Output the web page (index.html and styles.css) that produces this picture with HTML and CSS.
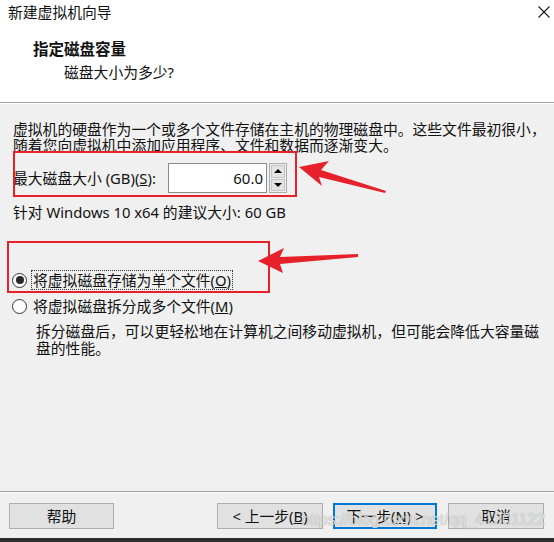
FILE: index.html
```html
<!DOCTYPE html>
<html lang="zh-CN">
<head>
  <meta charset="UTF-8">
  <meta name="viewport" content="width=device-width, initial-scale=1.0">
  <title>新建虚拟机向导</title>
  <link rel="stylesheet" href="styles.css">
</head>
<body>
  <div class="wizard">
    <div class="titlebar">
      <span class="titlebar-text">新建虚拟机向导</span>
      <svg class="close" viewBox="0 0 12 12" width="12" height="12">
        <path d="M0.5 0.5 L11.5 11.5 M11.5 0.5 L0.5 11.5" stroke="#1a1a1a" stroke-width="1.1" fill="none"/>
      </svg>
    </div>

    <div class="header">
      <div class="header-title">指定磁盘容量</div>
      <div class="header-sub">磁盘大小为多少?</div>
    </div>

    <div class="content">
      <p class="intro">虚拟机的硬盘作为一个或多个文件存储在主机的物理磁盘中。这些文件最初很小，<br>随着您向虚拟机中添加应用程序、文件和数据而逐渐变大。</p>

      <div class="size-row">
        <label class="size-label">最大磁盘大小 (GB)(<u>S</u>):</label>
        <div class="spin">
          <div class="spin-input">60.0</div>
          <div class="spin-buttons">
            <span class="spin-btn"><i class="tri-up"></i></span>
            <span class="spin-btn"><i class="tri-down"></i></span>
          </div>
        </div>
      </div>

      <p class="hint">针对 Windows 10 x64 的建议大小: 60 GB</p>

      <div class="options">
        <div class="option">
          <span class="radio checked"></span>
          <span class="option-text focused">将虚拟磁盘存储为单个文件(<u>O</u>)</span>
        </div>
        <div class="option">
          <span class="radio"></span>
          <span class="option-text">将虚拟磁盘拆分成多个文件(<u>M</u>)</span>
        </div>
        <p class="option-desc">拆分磁盘后，可以更轻松地在计算机之间移动虚拟机，但可能会降低大容量磁<br>盘的性能。</p>
      </div>
    </div>

    <div class="footer">
      <button class="btn btn-help">帮助</button>
      <div class="nav">
        <button class="btn btn-back">&lt; 上一步(<u>B</u>)</button>
        <button class="btn btn-next">下一步(<u>N</u>) &gt;</button>
        <button class="btn btn-cancel">取消</button>
      </div>
    </div>
    <div class="taskbar"></div>

    <!-- annotations drawn on top of the screenshot -->
    <svg class="marks" viewBox="0 0 554 542" width="554" height="542">
      <rect x="14" y="152" width="282" height="44" fill="none" stroke="#e6212a" stroke-width="2"/>
      <rect x="8" y="242" width="261" height="50" fill="none" stroke="#e6212a" stroke-width="2"/>
      <polygon fill="#e6212a" points="299,167 329,161 321,170 386,191 385,193 319,177 322,186"/>
      <polygon fill="#e6212a" points="258,261 284,248 280,257 358,254 358,257 280,264 283,273"/>
    </svg>
    <span class="watermark">https://blog.csdn.net/qq_41301122</span>
  </div>
</body>
</html>
```

FILE: styles.css
```css
body{
  margin: 0;
  font-family: "Noto Sans", "Noto Sans CJK SC", sans-serif;
  font-size: 14.8px;
  color: #111;
}
p{
  margin: 0;
}
.wizard{
  position: relative;
  width: 554px;
  height: 542px;
  display: flex;
  flex-direction: column;
  background: #f0f0f0;
  overflow: hidden;
}
.titlebar{
  height: 25px;
  flex: none;
  display: flex;
  align-items: center;
  justify-content: space-between;
  padding: 0 4px 0 8px;
  background: #fff;
}
.titlebar-text{
  line-height: 25px;
}
.close{
  display: block;
  margin-top: -1px;
}
.header{
  height: 78px;
  flex: none;
  box-sizing: border-box;
  padding: 14px 0 0 33px;
  background: #fff;
  border-bottom: 1px solid #a0a0a0;
  box-shadow: 0 1px 0 #fff;
}
.header-title{
  font-size: 15.5px;
  font-weight: bold;
  line-height: 20px;
}
.header-sub{
  margin: 3px 0 0 31px;
  line-height: 20px;
}
.content{
  flex: 1;
  padding: 18px 0 0 13px;
}
.intro{
  line-height: 16px;
  white-space: nowrap;
}
.size-row{
  display: flex;
  align-items: center;
  height: 30px;
  margin-top: 10px;
}
.size-label{
  width: 155px;
  line-height: 30px;
}
.spin{
  display: flex;
  gap: 2px;
}
.spin-input{
  width: 99px;
  height: 30px;
  box-sizing: border-box;
  border: 1px solid #8c8c8c;
  background: #fff;
  text-align: right;
  padding-right: 3px;
  line-height: 28px;
  font-size: 15px;
}
.spin-buttons{
  width: 18px;
  height: 30px;
  box-sizing: border-box;
  border: 1px solid #acacac;
  display: flex;
  flex-direction: column;
  padding: 1px;
  gap: 1px;
  background: #f0f0f0;
}
.spin-btn{
  flex: 1;
  display: flex;
  align-items: center;
  justify-content: center;
  background: #e3e3e3;
  border: 1px solid #c4c4c4;
}
.tri-up, .tri-down{
  width: 0;
  height: 0;
  border-left: 4px solid transparent;
  border-right: 4px solid transparent;
}
.tri-up{
  border-bottom: 4px solid #000;
}
.tri-down{
  border-top: 4px solid #000;
}
.hint{
  margin-top: 11px;
  line-height: 16px;
}
.options{
  margin-top: 50px;
}
.option{
  display: flex;
  align-items: center;
  height: 20px;
  margin-left: -1px;
  margin-bottom: 6px;
}
.radio{
  width: 15px;
  height: 15px;
  box-sizing: border-box;
  border: 1px solid #333;
  border-radius: 50%;
  background: #fff;
  display: flex;
  align-items: center;
  justify-content: center;
  margin-right: 4px;
}
.radio.checked::after{
  content: "";
  width: 8px;
  height: 8px;
  border-radius: 50%;
  background: #2a2a2a;
}
.option-text{
  line-height: 18px;
  padding: 0 1px;
  border: 1px solid transparent;
}
.option-text.focused{
  border: 1px dotted #333;
}
.option-desc{
  margin: 7px 0 0 23px;
  line-height: 17px;
  white-space: nowrap;
}
.footer{
  height: 47px;
  flex: none;
  box-sizing: border-box;
  display: flex;
  align-items: flex-start;
  padding: 11px 10px 0 9px;
  border-top: 1px solid #a0a0a0;
  box-shadow: inset 0 1px 0 #fff;
}
.nav{
  margin-left: auto;
  display: flex;
  gap: 10px;
}
.btn{
  height: 26px;
  box-sizing: border-box;
  border: 1px solid #adadad;
  background: #e1e1e1;
  font-family: inherit;
  font-size: 14.8px;
  line-height: 22px;
  padding: 0;
  color: #111;
}
.btn-help{
  width: 105px;
}
.btn-back{
  width: 106px;
}
.btn-next{
  width: 104px;
  border: 2px solid #0078d7;
}
.btn-cancel{
  width: 96px;
  margin-left: 1px;
}
.taskbar{
  height: 4px;
  flex: none;
  background: #2b2b2b;
}
.marks{
  position: absolute;
  left: 0;
  top: 0;
  pointer-events: none;
}
.watermark{
  position: absolute;
  left: 301px;
  top: 510px;
  font-family: "Liberation Sans", Arial, sans-serif;
  font-size: 16px;
  line-height: 20px;
  color: rgba(255, 255, 255, 0.7);
  text-shadow: 0 0 1px rgba(100, 100, 100, 0.7);
  pointer-events: none;
}
```
